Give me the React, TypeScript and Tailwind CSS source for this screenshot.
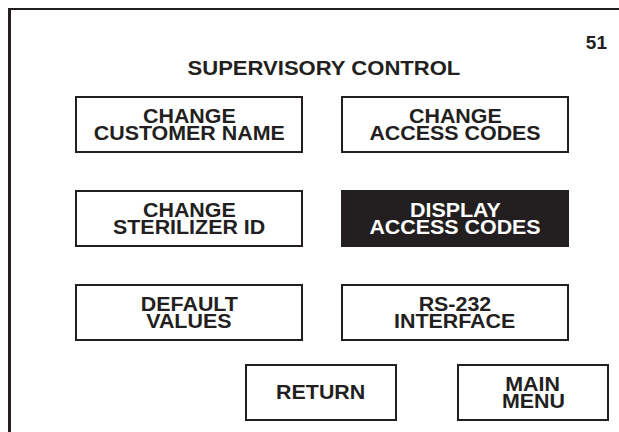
import React from "react";

const ink = "text-[#231f20]";

function Btn({ lines, dark = false, w = "w-[228px]", h = "h-[57px]" }: { lines: string[]; dark?: boolean; w?: string; h?: string }) {
  return (
    <div
      className={`${w} ${h} border-2 border-[#231f20] flex flex-col items-center justify-center ${
        dark ? "bg-[#231f20] text-white" : `bg-white ${ink}`
      }`}
    >
      {lines.map((l) => (
        <span key={l} className="block scale-x-[1.07] text-[20px] leading-[17px] font-bold whitespace-nowrap">
          {l}
        </span>
      ))}
    </div>
  );
}

export default function App() {
  return (
    <div className={`w-[619px] h-[432px] bg-white overflow-hidden pl-[8px] pt-[8px] font-['Liberation_Sans',Arial,sans-serif] ${ink}`}>
      <div className="h-[440px] border-t-2 border-l-[3px] border-[#231f20] flex flex-col">
        <div className="flex justify-end pr-[12px] mt-[23px]">
          <span className="block text-[19px] leading-[19px] font-bold">51</span>
        </div>
        <div className="ml-[62px] w-[502px] flex justify-center mt-[5px]">
          <span className="block scale-x-[1.05] text-[21px] leading-[21px] font-bold whitespace-nowrap">SUPERVISORY CONTROL</span>
        </div>
        <div className="ml-[64px] mt-[18px] grid grid-cols-[228px_228px] gap-x-[38px] gap-y-[37px]">
          <Btn lines={["CHANGE", "CUSTOMER NAME"]} />
          <Btn lines={["CHANGE", "ACCESS CODES"]} />
          <Btn lines={["CHANGE", "STERILIZER ID"]} />
          <Btn lines={["DISPLAY", "ACCESS CODES"]} dark />
          <Btn lines={["DEFAULT", "VALUES"]} />
          <Btn lines={["RS-232", "INTERFACE"]} />
        </div>
        <div className="ml-[234px] mt-[23px] flex gap-x-[60px]">
          <Btn lines={["RETURN"]} w="w-[152px]" h="h-[57px]" />
          <Btn lines={["MAIN", "MENU"]} w="w-[152px]" h="h-[57px]" />
        </div>
      </div>
    </div>
  );
}
